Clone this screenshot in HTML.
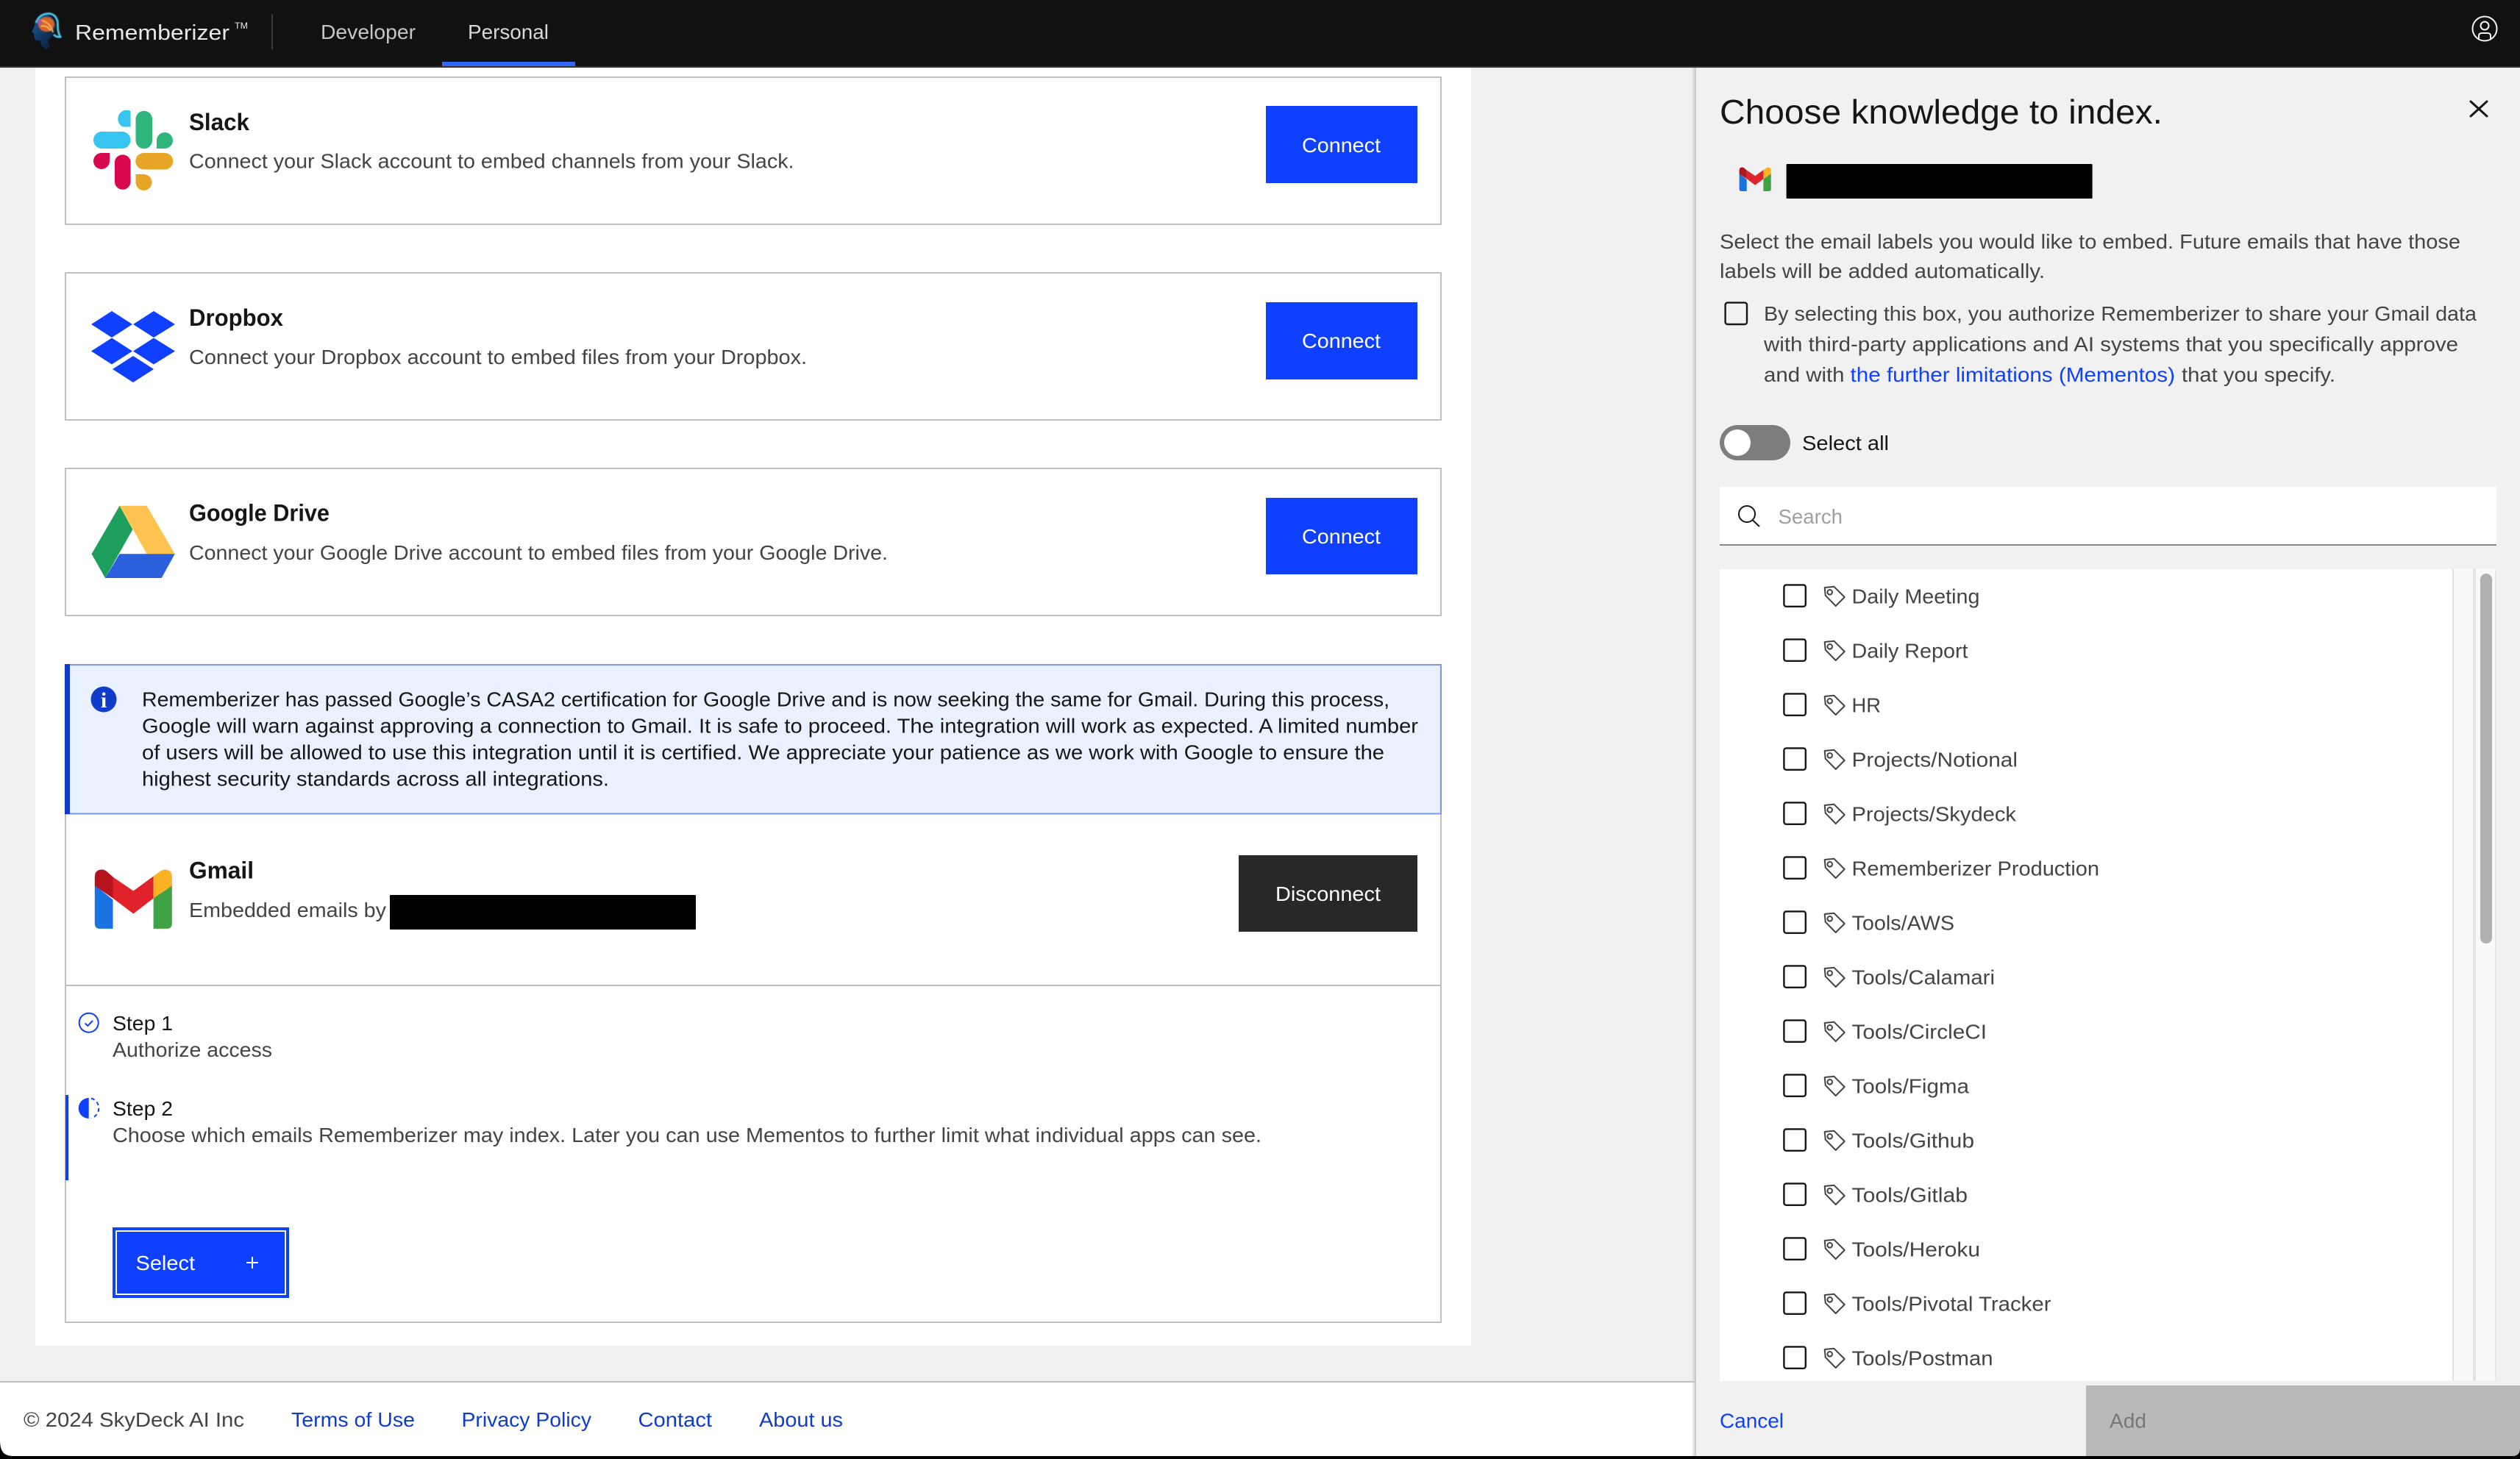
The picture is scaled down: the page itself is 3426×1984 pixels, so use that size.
<!DOCTYPE html>
<html lang="en">
<head>
<meta charset="utf-8">
<title>Rememberizer</title>
<style>
html,body{margin:0;padding:0;background:#000;width:3426px;height:1984px;overflow:hidden}
svg{display:block}
text{font-family:"Liberation Sans",sans-serif;font-size:28px;fill:#444;white-space:pre}
.d{fill:#161616}
.t{font-size:32px;font-weight:700;fill:#161616}
.w{fill:#fff}
.l{fill:#0f3cc9}
.b{fill:#0f3fff}
</style>
</head>
<body>
<svg xmlns="http://www.w3.org/2000/svg" width="3426" height="1984" viewBox="0 0 3426 1984">
<defs>
<g id="cb"><rect x="1.1" y="1.1" width="29.4" height="29.4" rx="3" fill="none" stroke="#161616" stroke-width="2.4"/></g>
<g id="tag" fill="none" stroke="#444" stroke-width="2"><path d="M.7 1 13.3-.3 27.7 14 15.7 26 1.7 11.7Z" stroke-linejoin="round"/><circle cx="7.7" cy="7.3" r="3.3"/></g>
<g id="gm">
<path fill="#1a73e0" d="M0 21 24.7 41V80.4H7Q0 80.4 0 73Z"/>
<path fill="#b5141f" d="M0 22V10Q0 0 10 0 14 0 18 4L24.7 10V39Z"/>
<path fill="#e0232b" d="M24.7 10 52.5 29 79.8 9V39L52.5 60 24.7 39Z"/>
<path fill="#fbb225" d="M79.8 9 88 3Q92 0 95 0 105 0 105 10V22L79.8 39Z"/>
<path fill="#3fa344" d="M79.8 39 105 22V73Q105 80.4 98 80.4H79.8Z"/>
</g>
<linearGradient id="sh" x1="0" x2="1" y1="0" y2="0"><stop offset="0" stop-color="#bbb" stop-opacity="0"/><stop offset="1" stop-color="#c6c6c6"/></linearGradient>
<linearGradient id="face" x1="0" x2="1" y1="0" y2="1"><stop offset="0" stop-color="#1c5aa0"/><stop offset="1" stop-color="#0a1626"/></linearGradient>
<filter id="bl"><feGaussianBlur stdDeviation=".9"/></filter>
<filter id="bs"><feGaussianBlur stdDeviation=".5"/></filter>
</defs>

<rect width="3426" height="1984" fill="#f0f0f0"/>

<!-- main white panel -->
<rect x="48" y="92" width="1952" height="1738" fill="#fff"/>

<!-- footer -->
<rect x="0" y="1878" width="2310" height="102" fill="#fff"/>
<rect x="0" y="1878" width="2310" height="2" fill="#bdbdbd"/>
<text x="32" y="1940" textLength="300" lengthAdjust="spacingAndGlyphs">© 2024 SkyDeck AI Inc</text>
<text class="l" x="396" y="1940" textLength="168" lengthAdjust="spacingAndGlyphs">Terms of Use</text>
<text class="l" x="627.5" y="1940" textLength="176.5" lengthAdjust="spacingAndGlyphs">Privacy Policy</text>
<text class="l" x="867.500" y="1940" textLength="100.500" lengthAdjust="spacingAndGlyphs">Contact</text>
<text class="l" x="1032" y="1940" textLength="114" lengthAdjust="spacingAndGlyphs">About us</text>

<!-- Slack card -->
<rect x="89" y="105" width="1870" height="200" fill="#fff" stroke="#c0c0c0" stroke-width="2"/>
<g>
<path fill="#36c5f0" d="M177.5 172.5H167a11 11 0 1 1 10.500-21.500ZM138.500 179H166.500a11.500 11.500 0 0 1 11 11.500 11.500 11.500 0 0 1-11 11.500H138.500a11.500 11.500 0 0 1 0-23Z"/>
<path fill="#2eb67d" d="M184.500 162a11.200 11.200 0 0 1 22.500 0V191a11.200 11.200 0 0 1-22.500 0ZM213 202V191a11 11 0 1 1 22 0 11 11 0 0 1-11 11Z"/>
<path fill="#d9074d" d="M149 208V219a11 11 0 1 1-22 0 11 11 0 0 1 11-11ZM156 219a11 11 0 0 1 21.500 0V248a10.800 10.800 0 0 1-21.500 0Z"/>
<path fill="#e7a626" d="M195.500 208H224a11 11 0 0 1 0 22.500H195.500a11 11 0 0 1 0-22.500ZM184.500 237H195.500a11 11 0 1 1-11 11Z"/>
</g>
<text class="t" x="257" y="177" textLength="82" lengthAdjust="spacingAndGlyphs">Slack</text>
<text x="257" y="228.500" textLength="822.500" lengthAdjust="spacingAndGlyphs">Connect your Slack account to embed channels from your Slack.</text>
<rect x="1721" y="144" width="206" height="105" fill="#0f3fff"/>
<text class="w" x="1770" y="207" textLength="107" lengthAdjust="spacingAndGlyphs">Connect</text>

<!-- Dropbox card -->
<rect x="89" y="371" width="1870" height="200" fill="#fff" stroke="#c0c0c0" stroke-width="2"/>
<g fill="#0f3fff">
<path d="M152 423 180 441 152 459 124 441Z"/>
<path d="M209 423 238 441 209 459 181 441Z"/>
<path d="M152 459.500 180 477.500 152 495.500 124 477.500Z"/>
<path d="M209 459.500 238 477.500 209 495.500 181 477.500Z"/>
<path d="M181 484 209 502 181 520 153 502Z"/>
</g>
<text class="t" x="257" y="443" textLength="128" lengthAdjust="spacingAndGlyphs">Dropbox</text>
<text x="257" y="495" textLength="840" lengthAdjust="spacingAndGlyphs">Connect your Dropbox account to embed files from your Dropbox.</text>
<rect x="1721" y="411" width="206" height="105" fill="#0f3fff"/>
<text class="w" x="1770" y="473" textLength="107" lengthAdjust="spacingAndGlyphs">Connect</text>

<!-- Drive card -->
<rect x="89" y="637" width="1870" height="200" fill="#fff" stroke="#c0c0c0" stroke-width="2"/>
<path fill="#1e9f5c" d="M162.600 687.700 180.400 720 143 786 124.600 753.300Z"/>
<path fill="#ffc44f" d="M162.600 687.700H199.600L237.600 753.300H199.600Z"/>
<path fill="#2c5fdc" d="M162.600 753.300H237.600L219.700 786H143Z"/>
<text class="t" x="257" y="708.500" textLength="191" lengthAdjust="spacingAndGlyphs">Google Drive</text>
<text x="257" y="761" textLength="950" lengthAdjust="spacingAndGlyphs">Connect your Google Drive account to embed files from your Google Drive.</text>
<rect x="1721" y="677" width="206" height="104" fill="#0f3fff"/>
<text class="w" x="1770" y="739" textLength="107" lengthAdjust="spacingAndGlyphs">Connect</text>

<!-- Gmail card -->
<rect x="89" y="904" width="1870" height="894" fill="#fff" stroke="#c0c0c0" stroke-width="2"/>
<rect x="89" y="904" width="1870" height="202.500" fill="#e8f1fd" stroke="#7b97e6" stroke-width="2"/>
<rect x="88" y="903" width="7" height="204" fill="#0f3cc9"/>
<circle cx="141" cy="951" r="17.500" fill="#0f3cc9"/>
<text x="141" y="962" text-anchor="middle" style="font-family:'Liberation Serif',serif;font-size:30px;font-weight:700;fill:#fff">i</text>
<g class="d">
<text class="d" x="193" y="960.700" textLength="1696" lengthAdjust="spacingAndGlyphs">Rememberizer has passed Google’s CASA2 certification for Google Drive and is now seeking the same for Gmail. During this process,</text>
<text class="d" x="193" y="996.700" textLength="1735" lengthAdjust="spacingAndGlyphs">Google will warn against approving a connection to Gmail. It is safe to proceed. The integration will work as expected. A limited number</text>
<text class="d" x="193" y="1032.700" textLength="1689" lengthAdjust="spacingAndGlyphs">of users will be allowed to use this integration until it is certified. We appreciate your patience as we work with Google to ensure the</text>
<text class="d" x="193" y="1068.500" textLength="635" lengthAdjust="spacingAndGlyphs">highest security standards across all integrations.</text>
</g>
<use href="#gm" transform="translate(128.800 1182.500)"/>
<text class="t" x="257" y="1194.500" textLength="88" lengthAdjust="spacingAndGlyphs">Gmail</text>
<text x="257" y="1247" textLength="268" lengthAdjust="spacingAndGlyphs">Embedded emails by</text>
<rect x="530" y="1217" width="416" height="47" rx="1" fill="#000"/>
<rect x="1684" y="1163" width="243" height="104" fill="#282828"/>
<text class="w" x="1734" y="1225" textLength="143" lengthAdjust="spacingAndGlyphs">Disconnect</text>
<rect x="88" y="1339" width="1872" height="2" fill="#c0c0c0"/>

<!-- steps -->
<circle cx="120.700" cy="1390.700" r="13" fill="none" stroke="#0f3fff" stroke-width="2"/>
<path d="M115.700 1391.500 119.300 1395 126 1388" fill="none" stroke="#0f3fff" stroke-width="2"/>
<text class="d" x="153" y="1401" textLength="82" lengthAdjust="spacingAndGlyphs">Step 1</text>
<text x="153" y="1437" textLength="217" lengthAdjust="spacingAndGlyphs">Authorize access</text>
<rect x="89" y="1489" width="4" height="116" fill="#0f3fff"/>
<path d="M120.700 1493a14 14 0 0 0 0 28Z" fill="#0f3fff"/>
<path d="M124 1493.500a14 14 0 0 1 0 27" fill="none" stroke="#0f3fff" stroke-width="2" stroke-dasharray="5 4"/>
<text class="d" x="153" y="1517" textLength="82" lengthAdjust="spacingAndGlyphs">Step 2</text>
<text x="153" y="1553" textLength="1562" lengthAdjust="spacingAndGlyphs">Choose which emails Rememberizer may index. Later you can use Mementos to further limit what individual apps can see.</text>
<rect x="153" y="1669" width="240" height="96" fill="#0f3fff"/>
<rect x="158" y="1674" width="230" height="86" fill="none" stroke="#fff" stroke-width="2"/>
<text class="w" x="184.500" y="1727" textLength="80.500" lengthAdjust="spacingAndGlyphs">Select</text>
<path d="M343 1709V1725M335 1717H351" stroke="#fff" stroke-width="2"/>

<!-- side panel -->
<rect x="2300" y="92" width="6" height="1888" fill="url(#sh)"/>
<rect x="2306" y="92" width="1120" height="1888" fill="#f1f1f1"/>
<text class="d" x="2338" y="168" textLength="602" lengthAdjust="spacingAndGlyphs" style="font-size:46px">Choose knowledge to index.</text>
<path d="M3359 138 3381 158M3381 138 3359 158" stroke="#161616" stroke-width="3" stroke-linecap="round"/>
<use href="#gm" transform="translate(2364.600 227.500) scale(.411 .404)"/>
<rect x="2428.600" y="223" width="416" height="47" rx="1" fill="#000"/>
<text x="2338" y="338" textLength="1007" lengthAdjust="spacingAndGlyphs">Select the email labels you would like to embed. Future emails that have those</text>
<text x="2338" y="378" textLength="442" lengthAdjust="spacingAndGlyphs">labels will be added automatically.</text>
<use href="#cb" transform="translate(2344.500 410.500)"/>
<text x="2398" y="436" textLength="969" lengthAdjust="spacingAndGlyphs">By selecting this box, you authorize Rememberizer to share your Gmail data</text>
<text x="2398" y="477.500" textLength="944" lengthAdjust="spacingAndGlyphs">with third-party applications and AI systems that you specifically approve</text>
<text x="2398" y="519" textLength="109.500" lengthAdjust="spacingAndGlyphs">and with</text>
<text class="b" x="2515.500" y="519" textLength="441.500" lengthAdjust="spacingAndGlyphs">the further limitations (Mementos)</text>
<text x="2966" y="519" textLength="209" lengthAdjust="spacingAndGlyphs">that you specify.</text>
<rect x="2338" y="578" width="96" height="48" rx="24" fill="#7d7d7d"/>
<circle cx="2362" cy="602" r="18" fill="#fff"/>
<text class="d" x="2450" y="612" textLength="118" lengthAdjust="spacingAndGlyphs">Select all</text>
<rect x="2338" y="662" width="1056" height="80" fill="#fff"/>
<rect x="2338" y="740" width="1056" height="2" fill="#8a8a8a"/>
<circle cx="2375" cy="699" r="11" fill="none" stroke="#161616" stroke-width="2"/>
<path d="M2382.500 707 2392 716" stroke="#161616" stroke-width="2"/>
<text x="2417.500" y="712" textLength="87.500" lengthAdjust="spacingAndGlyphs" style="fill:#a0a0a0">Search</text>

<!-- list -->
<rect x="2338" y="774" width="996" height="1104" fill="#fff"/>
<rect x="3334" y="774" width="60" height="1104" fill="#f9f9f9"/>
<rect x="3334" y="774" width="2" height="1104" fill="#e2e2e2"/>
<rect x="3362" y="774" width="4" height="1104" fill="#e2e2e2"/>
<rect x="3392" y="774" width="2" height="1104" fill="#e8e8e8"/>
<rect x="3372" y="780" width="16" height="503" rx="8" fill="#b0b0b0"/>

<use href="#cb" x="2424.300" y="794.300"/><use href="#tag" x="2480" y="798"/>
<text x="2517.500" y="820.700" textLength="174" lengthAdjust="spacingAndGlyphs">Daily Meeting</text>
<use href="#cb" x="2424.300" y="868.300"/><use href="#tag" x="2480" y="872"/>
<text x="2517.500" y="894.700" textLength="158" lengthAdjust="spacingAndGlyphs">Daily Report</text>
<use href="#cb" x="2424.300" y="942.300"/><use href="#tag" x="2480" y="946"/>
<text x="2517.500" y="968.700" textLength="39.500" lengthAdjust="spacingAndGlyphs">HR</text>
<use href="#cb" x="2424.300" y="1016.300"/><use href="#tag" x="2480" y="1020"/>
<text x="2517.500" y="1042.700" textLength="225.500" lengthAdjust="spacingAndGlyphs">Projects/Notional</text>
<use href="#cb" x="2424.300" y="1090.300"/><use href="#tag" x="2480" y="1094"/>
<text x="2517.500" y="1116.700" textLength="223.500" lengthAdjust="spacingAndGlyphs">Projects/Skydeck</text>
<use href="#cb" x="2424.300" y="1164.300"/><use href="#tag" x="2480" y="1168"/>
<text x="2517.500" y="1190.700" textLength="336.500" lengthAdjust="spacingAndGlyphs">Rememberizer Production</text>
<use href="#cb" x="2424.300" y="1238.300"/><use href="#tag" x="2480" y="1242"/>
<text x="2517.500" y="1264.700" textLength="139.500" lengthAdjust="spacingAndGlyphs">Tools/AWS</text>
<use href="#cb" x="2424.300" y="1312.300"/><use href="#tag" x="2480" y="1316"/>
<text x="2517.500" y="1338.700" textLength="194.500" lengthAdjust="spacingAndGlyphs">Tools/Calamari</text>
<use href="#cb" x="2424.300" y="1386.300"/><use href="#tag" x="2480" y="1390"/>
<text x="2517.500" y="1412.700" textLength="183.500" lengthAdjust="spacingAndGlyphs">Tools/CircleCI</text>
<use href="#cb" x="2424.300" y="1460.300"/><use href="#tag" x="2480" y="1464"/>
<text x="2517.500" y="1486.700" textLength="159.500" lengthAdjust="spacingAndGlyphs">Tools/Figma</text>
<use href="#cb" x="2424.300" y="1534.300"/><use href="#tag" x="2480" y="1538"/>
<text x="2517.500" y="1560.700" textLength="166.500" lengthAdjust="spacingAndGlyphs">Tools/Github</text>
<use href="#cb" x="2424.300" y="1608.300"/><use href="#tag" x="2480" y="1612"/>
<text x="2517.500" y="1634.700" textLength="157.500" lengthAdjust="spacingAndGlyphs">Tools/Gitlab</text>
<use href="#cb" x="2424.300" y="1682.300"/><use href="#tag" x="2480" y="1686"/>
<text x="2517.500" y="1708.700" textLength="174.500" lengthAdjust="spacingAndGlyphs">Tools/Heroku</text>
<use href="#cb" x="2424.300" y="1756.300"/><use href="#tag" x="2480" y="1760"/>
<text x="2517.500" y="1782.700" textLength="271" lengthAdjust="spacingAndGlyphs">Tools/Pivotal Tracker</text>
<use href="#cb" x="2424.300" y="1830.300"/><use href="#tag" x="2480" y="1834"/>
<text x="2517.500" y="1856.700" textLength="192" lengthAdjust="spacingAndGlyphs">Tools/Postman</text>

<!-- panel actions -->
<text class="b" x="2338" y="1941.700" textLength="87" lengthAdjust="spacingAndGlyphs">Cancel</text>
<rect x="2836" y="1884" width="590" height="96" fill="#b9b9b9"/>
<text x="2868" y="1941.700" textLength="50" lengthAdjust="spacingAndGlyphs" style="fill:#777">Add</text>

<!-- top bar -->
<rect x="0" y="0" width="3426" height="90" fill="#111"/>
<rect x="0" y="90" width="3426" height="2" fill="#333"/>
<g>
<path fill="url(#face)" d="M48 30C47 35 46 39 43 43L46 46 47 52C48 56 52 55 55 55L56 62 62 67 68 64 65 55C70 52 74 46 76 38 77 28 70 20 62 20 55 20 50 25 48 30Z"/>
<path d="M49 31C52 22 59 18.500 66 18.500 74 18.500 78.500 25 78.500 33 78.500 40 79 45 82 50 78 51 75 49 73 47" fill="none" stroke="#49bfe3" stroke-width="3" filter="url(#bs)"/>
<ellipse cx="63" cy="33" rx="11" ry="10" fill="#d8662c" filter="url(#bl)"/>
<path d="M53 28C61 27 70 34 72 44M56 36C61 34 66 37 69 42" stroke="#f7b25a" stroke-width="2" fill="none" filter="url(#bs)"/>
<ellipse cx="54" cy="30" rx="3" ry="4" fill="#a85a9a" filter="url(#bl)"/>
</g>
<text x="102" y="54" textLength="210" lengthAdjust="spacingAndGlyphs" style="font-size:29px;fill:#e8e8e8">Rememberizer</text>
<text x="319" y="39" textLength="18" lengthAdjust="spacingAndGlyphs" style="font-size:12px;fill:#e8e8e8">TM</text>
<rect x="369" y="19" width="2" height="48" fill="#3a3a3a"/>
<text x="436" y="53" textLength="129" lengthAdjust="spacingAndGlyphs" style="fill:#c6c6c6">Developer</text>
<text x="636" y="53" textLength="110" lengthAdjust="spacingAndGlyphs" style="fill:#d8d8d8">Personal</text>
<rect x="601" y="84" width="181" height="6" fill="#3169ff"/>
<circle cx="3378" cy="39" r="16.500" fill="none" stroke="#f4f4f4" stroke-width="2"/>
<circle cx="3378" cy="35" r="5.500" fill="none" stroke="#f4f4f4" stroke-width="2"/>
<path d="M3370 53V49Q3370 45 3374 45H3382Q3386 45 3386 49V53" fill="none" stroke="#f4f4f4" stroke-width="2"/>

<!-- window bottom edge -->
<rect x="0" y="1980" width="3426" height="4" fill="#000"/>
<path d="M0 1958C0 1972 4 1980 18 1980H0Z" fill="#000"/>
<path d="M3426 1970C3426 1976 3423 1980 3416 1980H3426Z" fill="#000"/>
</svg>
</body>
</html>
